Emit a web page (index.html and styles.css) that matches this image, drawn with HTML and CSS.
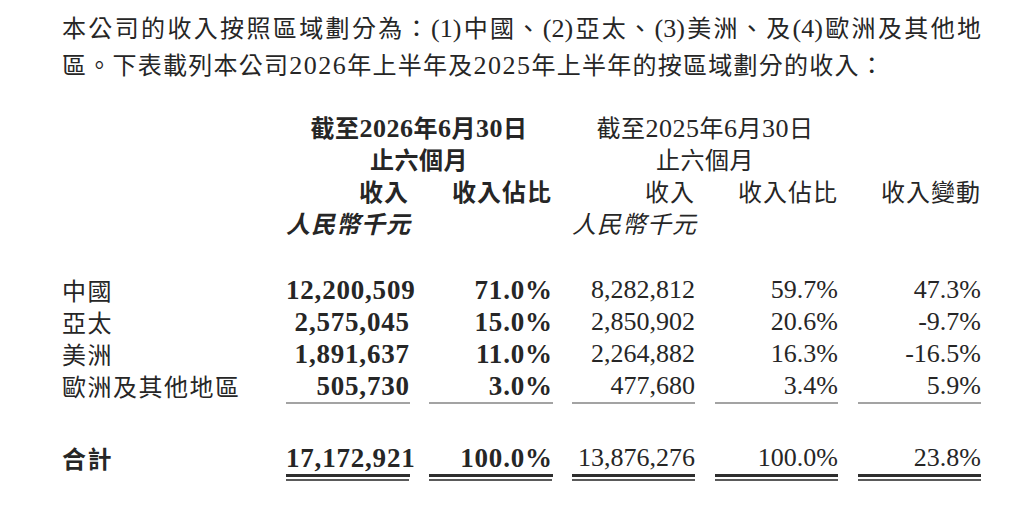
FILE: index.html
```html
<!DOCTYPE html>
<html lang="zh-Hant">
<head>
<meta charset="utf-8">
<title>按區域劃分的收入</title>
<link rel="stylesheet" href="styles.css">
</head>
<body>
<div class="page">
  <div class="para">
    <div class="line justify">本公司的收入按照區域劃分為：<span class="lat">(1)</span>中國、<span class="lat">(2)</span>亞太、<span class="lat">(3)</span>美洲、及<span class="lat">(4)</span>歐洲及其他地</div>
    <div class="line second">區。下表載列本公司<span class="lat num">2026</span>年上半年及<span class="lat num">2025</span>年上半年的按區域劃分的收入：</div>
  </div>

  <div class="table">
    <div class="cell"></div>
    <div class="cell span2 center b">截至<span class="lat">2026</span>年<span class="lat">6</span>月<span class="lat">30</span>日</div>
    <div class="cell span2 center">截至<span class="lat">2025</span>年<span class="lat">6</span>月<span class="lat">30</span>日</div>
    <div class="cell"></div>

    <div class="cell"></div>
    <div class="cell span2 center b">止六個月</div>
    <div class="cell span2 center">止六個月</div>
    <div class="cell"></div>

    <div class="cell"></div>
    <div class="cell r b">收入</div>
    <div class="cell r b">收入佔比</div>
    <div class="cell r">收入</div>
    <div class="cell r">收入佔比</div>
    <div class="cell r">收入變動</div>

    <div class="cell"></div>
    <div class="cell r it b unit">人民幣千元</div>
    <div class="cell"></div>
    <div class="cell r it unit">人民幣千元</div>
    <div class="cell"></div>
    <div class="cell"></div>

    <div class="spacer top"></div>

    <div class="cell label">中國</div>
    <div class="cell r n b">12,200,509</div>
    <div class="cell r n b">71.0%</div>
    <div class="cell r n">8,282,812</div>
    <div class="cell r n">59.7%</div>
    <div class="cell r n">47.3%</div>

    <div class="cell label">亞太</div>
    <div class="cell r n b">2,575,045</div>
    <div class="cell r n b">15.0%</div>
    <div class="cell r n">2,850,902</div>
    <div class="cell r n">20.6%</div>
    <div class="cell r n">-9.7%</div>

    <div class="cell label">美洲</div>
    <div class="cell r n b">1,891,637</div>
    <div class="cell r n b">11.0%</div>
    <div class="cell r n">2,264,882</div>
    <div class="cell r n">16.3%</div>
    <div class="cell r n">-16.5%</div>

    <div class="cell label">歐洲及其他地區</div>
    <div class="cell r n b single">505,730</div>
    <div class="cell r n b single">3.0%</div>
    <div class="cell r n single">477,680</div>
    <div class="cell r n single">3.4%</div>
    <div class="cell r n single">5.9%</div>

    <div class="spacer mid"></div>

    <div class="cell label b">合計</div>
    <div class="cell r n b dbl"><span class="thick">17,172,921</span></div>
    <div class="cell r n b dbl"><span class="thick">100.0%</span></div>
    <div class="cell r n dbl"><span class="thick">13,876,276</span></div>
    <div class="cell r n dbl"><span class="thick">100.0%</span></div>
    <div class="cell r n dbl"><span class="thick">23.8%</span></div>
  </div>
</div>
</body>
</html>
```
FILE: styles.css
```css
html, body {
  margin: 0;
  padding: 0;
  background: #ffffff;
}

body {
  color: #262626;
  font-family: "Liberation Serif", "Noto Sans CJK TC", serif;
}

.page {
  padding: 9px 0 0 62px;
  width: 919px;
}

.para {
  font-family: "Noto Sans CJK TC", sans-serif;
  font-size: 24px;
  line-height: 35px;
}

.line {
  white-space: nowrap;
}

.justify {
  text-align: justify;
  text-align-last: justify;
  white-space: normal;
}

.second {
  letter-spacing: 1.25px;
}

.lat {
  font-family: "Liberation Serif", serif;
  font-size: 26px;
}

.second .num {
  letter-spacing: 1.5px;
}

.table {
  display: grid;
  grid-template-columns: 204px repeat(5, 123px);
  column-gap: 20px;
  margin-top: 28px;
  font-family: "Noto Sans CJK TC", sans-serif;
  font-size: 24px;
}

.cell {
  line-height: 32px;
  height: 32px;
  white-space: nowrap;
  letter-spacing: 1px;
}

.span2 {
  grid-column: span 2;
}

.center {
  text-align: center;
  letter-spacing: 0.5px;
}

.r {
  text-align: right;
}

.b {
  font-weight: 700;
}

.it {
  font-style: italic;
}

.unit {
  margin-right: -2px;
}

.label {
  letter-spacing: 1.5px;
}

.n {
  font-family: "Liberation Serif", serif;
  font-size: 26px;
  letter-spacing: 0;
}

.n.b {
  font-size: 27px;
  letter-spacing: 0.8px;
  margin-right: -0.8px;
}

.spacer {
  grid-column: 1 / -1;
}

.spacer.top {
  height: 35px;
}

.spacer.mid {
  height: 38px;
}

.single {
  border-bottom: 2px solid #a3a3a3;
}

.dbl {
  height: auto;
  padding-bottom: 2px;
  border-bottom: 2px solid #5a5a5a;
}

.thick {
  display: block;
  height: 32px;
  border-bottom: 3px solid #2e2e2e;
}

.n.b.dbl {
  margin-right: 0;
}

.n.b .thick {
  margin-right: -0.8px;
}
```
